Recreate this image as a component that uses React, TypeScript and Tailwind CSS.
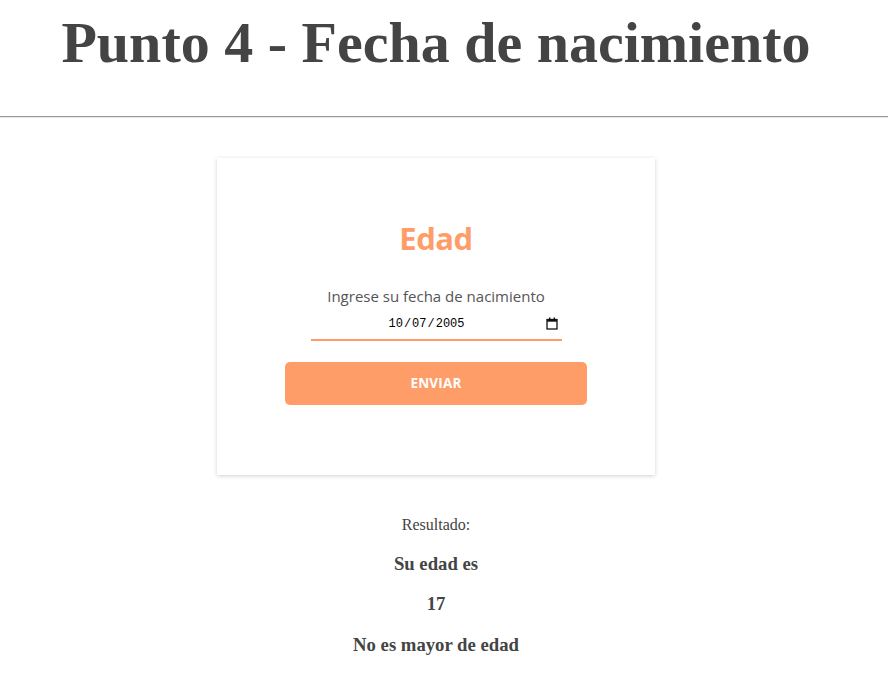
import React from "react";

function CalendarIcon() {
  return (
    <svg width="12" height="13" viewBox="0 0 12 13" className="block">
      <rect x="1" y="2.5" width="10" height="9.5" fill="none" stroke="#111" strokeWidth="1.3" />
      <rect x="1" y="2.5" width="10" height="2.2" fill="#111" />
      <rect x="3" y="0.5" width="1.4" height="2.5" fill="#111" />
      <rect x="7.6" y="0.5" width="1.4" height="2.5" fill="#111" />
    </svg>
  );
}

export default function App() {
  return (
    <div className="w-[872px] bg-white text-[#444]">
      <div className="flex justify-center pt-[11px] pb-[41px]">
        <h1 className="m-0 text-[58px] leading-[64px] font-bold font-['Liberation_Serif',serif] text-[#444]">
          Punto 4 - Fecha de nacimiento
        </h1>
      </div>
      <div className="w-[888px] h-[2px] border-t border-t-[#9a9a9a] border-b border-b-[#e8e8e8]" />
      <div className="flex justify-center pt-[40px]">
        <div className="w-[438px] h-[317px] bg-white shadow-[0_1px_4px_rgba(0,0,0,0.18)] flex flex-col items-center pt-[60px] font-['Open_Sans',sans-serif]">
          <div className="text-[31px] leading-[40px] font-bold text-[#ff9d68] tracking-[-0.5px]">Edad</div>
          <div className="mt-[28px] text-[15px] leading-[20px] text-[#555]">Ingrese su fecha de nacimiento</div>
          <div className="w-[251px] h-[35px] border-b-2 border-[#ff9d68] relative flex items-center justify-start pl-[78px] pt-[3px]">
            <span className="font-['Liberation_Mono',monospace] text-[12px] text-black flex">
              <span>10</span><span className="mx-[1px]">/</span><span>07</span><span className="mx-[1px]">/</span><span>2005</span>
            </span>
            <div className="absolute right-[4px] top-[11px]">
              <CalendarIcon />
            </div>
          </div>
          <button className="mt-[21px] w-[302px] h-[43px] rounded-[5px] bg-[#ff9d68] text-white font-bold text-[13.5px] tracking-[0.2px]">
            ENVIAR
          </button>
        </div>
      </div>
      <div className="flex flex-col items-center font-['Liberation_Serif',serif] text-[#444] pt-[41px]">
        <div className="text-[16px] leading-[18px]">Resultado:</div>
        <div className="mt-[19px] text-[18.72px] leading-[21.5px] font-bold">Su edad es</div>
        <div className="mt-[18.7px] text-[18.72px] leading-[21.5px] font-bold">17</div>
        <div className="mt-[19.5px] text-[18.72px] leading-[21.5px] font-bold">No es mayor de edad</div>
      </div>
    </div>
  );
}
